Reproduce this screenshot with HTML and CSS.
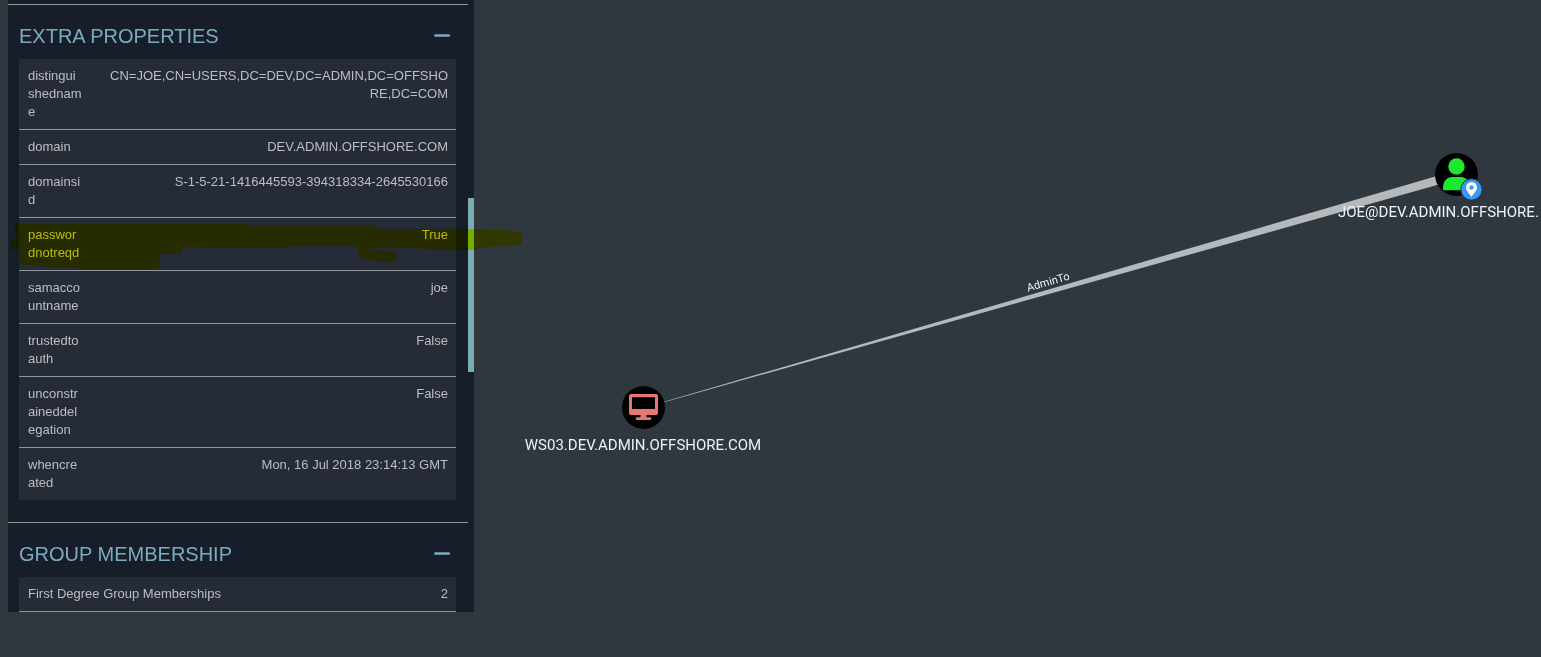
FILE: index.html
```
<!DOCTYPE html>
<html lang="en">
<head>
<meta charset="utf-8">
<title>Node info</title>
<link rel="stylesheet" href="styles.css">
</head>
<body>
<div class="app">
  <aside class="panel">
    <div class="panel-body">
      <section class="section">
        <header class="section-head">
          <h2>EXTRA PROPERTIES</h2>
          <button class="toggle" type="button" aria-label="Collapse extra properties">
            <svg width="18" height="18" viewBox="0 0 18 18"><path d="M2.4 8.5h13.4" stroke="currentColor" stroke-width="2.6" stroke-linecap="round"/></svg>
          </button>
        </header>
        <table class="props">
          <tbody>
            <tr><th scope="row">distinguishedname</th><td>CN=JOE,CN=USERS,DC=DEV,DC=ADMIN,DC=OFFSHORE,DC=COM</td></tr>
            <tr><th scope="row">domain</th><td>DEV.ADMIN.OFFSHORE.COM</td></tr>
            <tr><th scope="row">domainsid</th><td>S-1-5-21-1416445593-394318334-2645530166</td></tr>
            <tr><th scope="row">passwordnotreqd</th><td>True</td></tr>
            <tr><th scope="row">samaccountname</th><td>joe</td></tr>
            <tr><th scope="row">trustedtoauth</th><td>False</td></tr>
            <tr><th scope="row">unconstraineddelegation</th><td>False</td></tr>
            <tr><th scope="row">whencreated</th><td>Mon, 16 Jul 2018 23:14:13 GMT</td></tr>
          </tbody>
        </table>
      </section>
      <section class="section">
        <header class="section-head">
          <h2>GROUP MEMBERSHIP</h2>
          <button class="toggle" type="button" aria-label="Collapse group membership">
            <svg width="18" height="18" viewBox="0 0 18 18"><path d="M2.4 8.5h13.4" stroke="currentColor" stroke-width="2.6" stroke-linecap="round"/></svg>
          </button>
        </header>
        <table class="props counts">
          <tbody>
            <tr><th scope="row">First Degree Group Memberships</th><td>2</td></tr>
          </tbody>
        </table>
      </section>
    </div>
    <div class="scrollbar"><div class="thumb"></div></div>
  </aside>
  <main class="graph">
    <svg class="canvas" role="img" aria-label="Attack path graph">
      <path class="edge" d="M190 401.8 L962 176.3 L964 184.8 L190 402.2z"/>
      <text class="edge-label" transform="translate(554 291.5) rotate(-16)">AdminTo</text>

      <g transform="translate(169.5 407.5)">
        <circle r="21.5"/>
        <path fill="#e67873" fill-rule="evenodd" d="M-12.5 -13.5h25a2 2 0 0 1 2 2v17a2 2 0 0 1 -2 2h-9.5v2.3h3.5a1.3 1.3 0 0 1 0 2.6h-13a1.3 1.3 0 0 1 0 -2.6h3.5v-2.3h-9.5a2 2 0 0 1 -2 -2v-17a2 2 0 0 1 2 -2zM-11.5 -10.2v11.7h23v-11.7z"/>
      </g>
      <text class="node-label" x="169" y="450" text-anchor="middle">WS03.DEV.ADMIN.OFFSHORE.COM</text>

      <g transform="translate(982.5 174.5)">
        <circle r="21.5"/>
        <circle cy="-8" r="8.2" fill="#1ee82e"/>
        <path fill="#1ee82e" d="M-13.5 15.7V14C-13.5 6.5-9.5 2.6-4.5 2.6H4.5C9.5 2.6 13.5 6.5 13.5 14V15.7z"/>
        <circle cx="15" cy="15" r="10.7" fill="#3797f3" stroke="#202f3e" stroke-width="1"/>
        <path fill="#fff" fill-rule="evenodd" d="M15 22.5C13 19 9.5 16.5 9.5 13A5.5 5.5 0 0 1 20.5 13C20.5 16.5 17 19 15 22.5zM15 10.8a2.2 2.2 0 1 0 0 4.4a2.2 2.2 0 0 0 0 -4.4z"/>
      </g>
      <text class="node-label" x="864" y="217">JOE@DEV.ADMIN.OFFSHORE.</text>
    </svg>
  </main>
  <svg class="marker" width="540" height="280" aria-hidden="true">
    <path fill="#ff0" d="M15 224H248V225H376V229H483L484 230H507L508 231H515L521 233L522 236V244L516 246L500 246L480 248L474 250H427L417 248H367L379 250V251H396V262H380L368 260L360 257L358 253V247L353 246H289V248H203V247H181V254H160V267L155 269H80L79 268L45 267V266L25 265L19 263V250H11V239H18V237L15 236z"/>
  </svg>
</div>
</body>
</html>
```
FILE: styles.css
```
* { box-sizing: border-box; }

body {
  margin: 0;
  background: #30383f;
  color: #bcbdc0;
  font: 13px/18px "Liberation Sans", Arial, sans-serif;
}

.app {
  position: relative;
  display: flex;
  min-height: 100vh;
  padding-left: 8px;
  overflow: hidden;
}

.panel {
  display: flex;
  flex: none;
  align-self: flex-start;
  width: 466px;
  background: #171e29;
}

.panel-body {
  flex: 1;
  padding-top: 4px;
}

.section {
  padding: 0 12px 22px 11px;
  border-top: 1px solid #92969c;
}

.section:last-child { padding-bottom: 0; }

.section-head {
  display: flex;
  align-items: center;
  justify-content: space-between;
  padding: 19px 5px 11px 0;
}

.section-head h2 {
  margin: 0;
  color: #7babc0;
  font-size: 20px;
  font-weight: 400;
  line-height: 24px;
}

.toggle {
  display: flex;
  padding: 0;
  border: 0;
  background: none;
  color: #7babc0;
  cursor: pointer;
}

.props {
  width: 100%;
  table-layout: fixed;
  border-collapse: separate;
  border-spacing: 0;
  background: #262c37;
}

.props th,
.props td {
  padding: 8px;
  border-bottom: 1px solid #92969c;
  font-weight: 400;
  vertical-align: top;
  word-break: break-all;
}

.props th {
  width: 71px;
  padding-left: 9px;
  text-align: left;
}

.props td {
  padding-left: 16px;
  text-align: right;
}

.props tr:last-child > * { border-bottom: 0; }

.counts th { width: 80%; }

.counts tr:last-child > * { border-bottom: 1px solid #92969c; }

.scrollbar {
  flex: none;
  width: 6px;
  padding-top: 198px;
}

.thumb {
  height: 174px;
  background: #7aacb3;
}

.graph {
  flex: 1;
  min-width: 0;
  display: flex;
}

.canvas {
  width: 100%;
  min-height: 100%;
}

.edge { fill: #b6b9bb; }

.edge-label,
.node-label {
  fill: #f0f1f2;
  font-family: Roboto, sans-serif;
}

.edge-label { font-size: 11px; }

.node-label { font-size: 15px; }

/* Highlighter stroke drawn over the panel */
.marker {
  position: absolute;
  top: 0;
  left: 0;
  mix-blend-mode: multiply;
  pointer-events: none;
}
```
